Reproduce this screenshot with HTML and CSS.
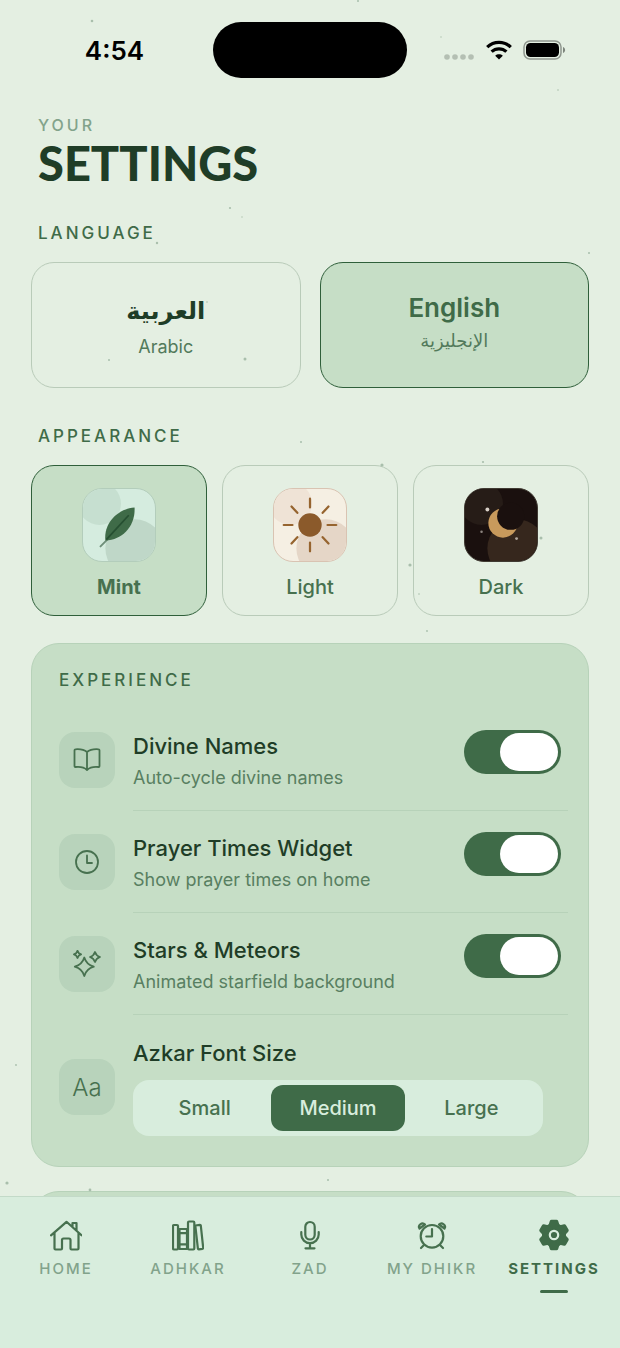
FILE: index.html
```html
<!DOCTYPE html>
<html lang="en">
<head>
    <meta charset="UTF-8">
    <meta name="viewport" content="width=device-width, initial-scale=1.0">
    <title>Settings</title>
    <link rel="stylesheet" href="styles.css">
</head>
<body>
    <!-- Starfield -->
    <svg class="stars" aria-hidden="true">
        <circle cx="92" cy="21" r="1.3"/>
        <circle cx="358" cy="1" r="1"/>
        <circle cx="441" cy="37" r="0.7"/>
        <circle cx="558" cy="90" r="0.8"/>
        <circle cx="230" cy="208" r="1.1"/>
        <circle cx="242" cy="217" r="0.7"/>
        <circle cx="157" cy="243" r="1.2"/>
        <circle cx="589" cy="253" r="1"/>
        <circle cx="207" cy="302" r="0.8"/>
        <circle cx="109" cy="360" r="1"/>
        <circle cx="245" cy="359" r="1.5"/>
        <circle cx="301" cy="442" r="1"/>
        <circle cx="483" cy="462" r="1.1"/>
        <circle cx="382" cy="465" r="1.6"/>
        <circle cx="541" cy="538" r="1.5"/>
        <circle cx="410" cy="565" r="1.6"/>
        <circle cx="419" cy="594" r="0.8"/>
        <circle cx="427" cy="631" r="0.9"/>
        <circle cx="16" cy="1065" r="0.9"/>
        <circle cx="328" cy="1180" r="1"/>
        <circle cx="7" cy="1183" r="1.6"/>
        <circle cx="90" cy="1190" r="1.4"/>
    </svg>

    <div class="status-bar">
        <div class="time">4:54</div>
        <div class="island"></div>
        <div class="status-icons">
            <svg width="32" height="20" viewBox="0 0 32 20" fill="#b4bfb3">
                <circle cx="4" cy="17" r="2.8"/>
                <circle cx="12" cy="17" r="2.8"/>
                <circle cx="20" cy="17" r="2.8"/>
                <circle cx="28" cy="17" r="2.8"/>
            </svg>
            <svg width="26" height="20" viewBox="0 0 26 20" fill="none" stroke="#000" stroke-width="3.2">
                <path d="M1.2 7.2C7.8 0.8 18.2 0.8 24.8 7.2"/>
                <path d="M5.6 11.7C9.8 7.8 16.2 7.8 20.4 11.7"/>
                <path d="M13 19.4L9.2 15.7C11.3 13.8 14.7 13.8 16.8 15.7Z" fill="#000" stroke="none"/>
            </svg>
            <svg width="43" height="20" viewBox="0 0 43 20">
                <rect x="1" y="1" width="37" height="18" rx="6" fill="none" stroke="#8f978e" stroke-width="1.5"/>
                <rect x="3" y="3" width="33" height="14" rx="4.5" fill="#000"/>
                <path d="M40 7C42.8 7.8 42.8 12.2 40 13Z" fill="#7d857c"/>
            </svg>
        </div>
    </div>

    <main>
        <header>
            <p class="eyebrow">YOUR</p>
            <h1>SETTINGS</h1>
        </header>

        <section class="language">
            <h2>LANGUAGE</h2>
            <div class="language-grid">
                <button class="option">
                    <span class="lang-name arabic" lang="ar">العربية</span>
                    <span class="lang-sub">Arabic</span>
                </button>
                <button class="option selected">
                    <span class="lang-name">English</span>
                    <span class="lang-sub" lang="ar">الإنجليزية</span>
                </button>
            </div>
        </section>

        <section class="appearance">
            <h2>APPEARANCE</h2>
            <div class="theme-grid">
                <button class="option theme selected">
                    <svg class="swatch mint" viewBox="0 0 74 74">
                        <circle cx="17" cy="15" r="22" fill="#c6dfd0"/>
                        <circle cx="53" cy="61" r="30" fill="#bfd7c8"/>
                        <path d="M18 59L26 51" stroke="#6f8f7a" stroke-width="2" stroke-linecap="round"/>
                        <path d="M53 19C37 20 21 34 23 53C41 52 54 38 53 19Z" fill="#3f6b48"/>
                        <path d="M24 52L47 27" stroke="#264f31" stroke-width="1.8"/>
                    </svg>
                    <span>Mint</span>
                </button>
                <button class="option theme">
                    <svg class="swatch light" viewBox="0 0 74 74">
                        <circle cx="17" cy="15" r="22" fill="#efe3d6"/>
                        <circle cx="53" cy="61" r="30" fill="#e5d6c7"/>
                        <circle cx="37" cy="37" r="12" fill="#8b5a2b"/>
                        <path d="M37 10V19M37 55V64M10 37H19M55 37H64M18 18L24 24.5M50 49.5L56 56M18 56L24 49.5M50 24.5L56 18" stroke="#96642f" stroke-width="2.3" stroke-linecap="round"/>
                    </svg>
                    <span>Light</span>
                </button>
                <button class="option theme">
                    <svg class="swatch dark" viewBox="0 0 74 74">
                        <circle cx="17" cy="15" r="22" fill="#261c17"/>
                        <circle cx="53" cy="61" r="30" fill="#36271d"/>
                        <circle cx="39" cy="35" r="15" fill="#c89a5c"/>
                        <circle cx="47" cy="28" r="14" fill="#1a100e"/>
                        <circle cx="23" cy="21" r="2" fill="#d8d0c8"/>
                        <circle cx="17" cy="44" r="1.3" fill="#8d8580"/>
                        <circle cx="53" cy="51" r="1.5" fill="#b0a69e"/>
                    </svg>
                    <span>Dark</span>
                </button>
            </div>
        </section>

        <section class="card">
            <h2>EXPERIENCE</h2>

            <div class="row">
                <div class="row-icon">
                    <svg viewBox="0 0 28 28">
                        <path d="M14 6C11 3.5 6 3 2.3 3.3Q1.5 3.3 1.5 4.2V20.2Q1.5 21 2.3 21C6 20.6 11 21 14 24C17 21 22 20.6 25.7 21Q26.5 21 26.5 20.2V4.2Q26.5 3.3 25.7 3.3C22 3 17 3.5 14 6ZM14 6V24"/>
                    </svg>
                </div>
                <div class="row-body">
                    <label class="row-text" for="divine-names">
                        <span class="row-title">Divine Names</span>
                        <span class="row-sub">Auto-cycle divine names</span>
                    </label>
                    <input class="toggle" type="checkbox" id="divine-names" checked>
                </div>
            </div>

            <div class="row">
                <div class="row-icon">
                    <svg viewBox="0 0 28 28">
                        <circle cx="14" cy="14" r="11"/>
                        <path d="M14 7.5V15H19"/>
                    </svg>
                </div>
                <div class="row-body">
                    <label class="row-text" for="prayer-widget">
                        <span class="row-title">Prayer Times Widget</span>
                        <span class="row-sub">Show prayer times on home</span>
                    </label>
                    <input class="toggle" type="checkbox" id="prayer-widget" checked>
                </div>
            </div>

            <div class="row">
                <div class="row-icon">
                    <svg viewBox="0 0 28 28">
                        <path d="M11.3 7.5Q13.4 14.6 20.8 16.7Q13.4 18.8 11.3 26Q9.2 18.8 1.8 16.7Q9.2 14.6 11.3 7.5Z"/>
                        <path d="M22 2Q23.2 5.8 27 7Q23.2 8.2 22 12Q20.8 8.2 17 7Q20.8 5.8 22 2Z"/>
                        <path d="M4.5 0.7Q5.3 3.5 8.1 4.3Q5.3 5.1 4.5 8Q3.7 5.1 0.9 4.3Q3.7 3.5 4.5 0.7Z"/>
                    </svg>
                </div>
                <div class="row-body">
                    <label class="row-text" for="stars-meteors">
                        <span class="row-title">Stars &amp; Meteors</span>
                        <span class="row-sub">Animated starfield background</span>
                    </label>
                    <input class="toggle" type="checkbox" id="stars-meteors" checked>
                </div>
            </div>

            <div class="row">
                <div class="row-icon font-icon">Aa</div>
                <fieldset class="font-size">
                    <legend class="row-title">Azkar Font Size</legend>
                    <div class="segments">
                        <label><input type="radio" name="font-size"><span>Small</span></label>
                        <label><input type="radio" name="font-size" checked><span>Medium</span></label>
                        <label><input type="radio" name="font-size"><span>Large</span></label>
                    </div>
                </fieldset>
            </div>
        </section>

        <section class="card next-card"></section>
    </main>

    <nav class="tab-bar">
        <a href="#home" class="tab">
            <svg viewBox="0 0 32 32">
                <path d="M1 16.3L16.5 2.8L31.5 16.3M4.5 14V29.5Q4.5 30.5 5.5 30.5H11Q12 30.5 12 29.5V21Q12 19.5 13.5 19.5H19Q20.5 19.5 20.5 21V29.5Q20.5 30.5 21.5 30.5H27.5Q28.5 30.5 28.5 29.5V14M22.5 8V4H26.5V11.5"/>
            </svg>
            HOME
        </a>
        <a href="#adhkar" class="tab">
            <svg viewBox="0 0 32 32">
                <rect x="1" y="6" width="5" height="24.5" rx="1"/>
                <path d="M7.5 10H15V30H7.5ZM7.5 14.2H15M7.5 25.4H15"/>
                <rect x="16" y="2.5" width="6.3" height="28" rx="1"/>
                <path d="M23.3 6.5L28 5.8Q28.7 5.8 28.8 6.5L31.2 28.9Q31.2 29.6 30.5 29.8L26.7 30.4Q26 30.4 25.9 29.7Z"/>
            </svg>
            ADHKAR
        </a>
        <a href="#zad" class="tab">
            <svg viewBox="0 0 32 32">
                <rect x="11.3" y="3" width="9.4" height="17.5" rx="4.7"/>
                <path d="M7.3 13V15.5A8.7 8.7 0 0 0 24.7 15.5V13M16 24.2V29.3M11.5 29.3H20.5"/>
            </svg>
            ZAD
        </a>
        <a href="#dhikr" class="tab">
            <svg viewBox="0 0 32 32">
                <circle cx="16" cy="17.3" r="11.3"/>
                <path d="M16 10V17.5H10.3M8 26L5 29M24 26L27 29M3.5 9.5C1.5 6.5 6 2.5 9 5.5ZM28.5 9.5C30.5 6.5 26 2.5 23 5.5Z"/>
            </svg>
            MY DHIKR
        </a>
        <a href="#settings" class="tab active">
            <svg class="gear" viewBox="0 0 32 32">
                <circle cx="16" cy="16" r="12"/>
                <path id="tooth" d="M10.5 6L11.8 2Q12.2 0.7 13.5 0.7H18.5Q19.8 0.7 20.2 2L21.5 6V26L20.2 30Q19.8 31.3 18.5 31.3H13.5Q12.2 31.3 11.8 30L10.5 26Z"/>
                <use href="#tooth" transform="rotate(60 16 16)"/>
                <use href="#tooth" transform="rotate(120 16 16)"/>
                <circle class="gear-hole" cx="16" cy="16" r="4.2"/>
            </svg>
            SETTINGS
        </a>
    </nav>
</body>
</html>
```
FILE: styles.css
```css
* {
    margin: 0;
    padding: 0;
    box-sizing: border-box;
}

body {
    background-color: #e4efe2;
    color: #1f3d27;
    font-family: Inter, "DejaVu Sans", sans-serif;
    height: 100vh;
    display: flex;
    flex-direction: column;
    overflow: hidden;
}

button {
    font-family: inherit;
    color: inherit;
    cursor: pointer;
}

.stars {
    position: absolute;
    top: 0;
    left: 0;
    width: 100%;
    height: 100%;
    fill: #a9bfac;
    pointer-events: none;
}

/* Status bar */
.status-bar {
    display: grid;
    grid-template-columns: 1fr 194px 1fr;
    align-items: center;
    padding-top: 22px;
    margin-bottom: 37px;
}

.time {
    padding-left: 16px;
    text-align: center;
    font-size: 26px;
    font-weight: 600;
    color: #000;
}

.island {
    height: 56px;
    border-radius: 28px;
    background-color: #000;
}

.status-icons {
    display: flex;
    justify-content: flex-end;
    gap: 11px;
    padding-right: 54px;
}

/* Content */
main {
    flex: 1;
    min-height: 0;
    overflow: hidden;
    padding: 0 31px;
}

header {
    padding: 0 7px;
    margin-bottom: 32px;
}

.eyebrow {
    font-size: 16px;
    line-height: 20px;
    font-weight: 500;
    letter-spacing: 3px;
    color: #82a38b;
}

h1 {
    font-family: Lato, sans-serif;
    font-size: 47px;
    line-height: 56px;
    font-weight: 900;
}

h2 {
    font-size: 17px;
    line-height: 20px;
    font-weight: 500;
    letter-spacing: 3px;
    color: #3f6b48;
    padding: 0 7px;
    margin-bottom: 19px;
}

.language {
    margin-bottom: 38px;
}

.appearance {
    margin-bottom: 27px;
}

.language-grid {
    display: grid;
    grid-template-columns: 1fr 1fr;
    gap: 19px;
}

.theme-grid {
    display: grid;
    grid-template-columns: repeat(3, 1fr);
    gap: 15px;
}

.option {
    display: flex;
    flex-direction: column;
    align-items: center;
    background: none;
    border: 1px solid #b9cbb9;
    border-radius: 23px;
    padding: 28px 20px;
}

.option.selected {
    background-color: #c6dec6;
    border-color: #2f5f3a;
}

.lang-name {
    font-size: 26px;
    line-height: 34px;
    font-weight: 600;
    margin-bottom: 4px;
}

.selected .lang-name {
    color: #3f6b48;
}

.lang-name.arabic {
    font-size: 24px;
    font-weight: 700;
    line-height: 40px;
}

.lang-sub {
    font-size: 18px;
    line-height: 24px;
    color: #527a5b;
}

.option.theme {
    gap: 11px;
    padding: 22px 10px 14px;
    font-size: 20px;
    line-height: 28px;
    font-weight: 500;
    color: #47714f;
}

.option.theme.selected {
    font-weight: 700;
}

.swatch {
    width: 74px;
    height: 74px;
    border-radius: 20px;
    border: 1px solid #b3cdbb;
}

.swatch.mint {
    background-color: #d5ecdf;
}

.swatch.light {
    background-color: #f5efe3;
    border-color: #d9c3b2;
}

.swatch.dark {
    background-color: #1a100e;
    border-color: #403a32;
}

/* Experience card */
.card {
    background-color: #c6dec6;
    border: 1px solid #b7d2b9;
    border-radius: 28px;
    padding: 26px 27px 7px;
    margin-bottom: 24px;
}

.card h2 {
    padding: 0;
}

.next-card {
    height: 200px;
}

.row {
    display: flex;
    align-items: center;
    gap: 18px;
}

.row-icon {
    display: flex;
    align-items: center;
    justify-content: center;
    width: 56px;
    height: 56px;
    border-radius: 16px;
    background-color: #b8d3bb;
    color: #47714f;
}

.row-icon svg {
    width: 28px;
    height: 28px;
    fill: none;
    stroke: #47714f;
    stroke-width: 1.8;
    stroke-linecap: round;
    stroke-linejoin: round;
}

.font-icon {
    font-size: 24px;
    font-weight: 300;
}

.row-body {
    flex: 1;
    display: flex;
    justify-content: space-between;
    align-items: flex-start;
    margin-right: -7px;
    padding: 21px 7px 20px 0;
    border-bottom: 1px solid #b7d2b9;
}

.row-text {
    display: flex;
    flex-direction: column;
    gap: 4px;
}

.row-title {
    font-size: 22px;
    line-height: 32px;
    font-weight: 500;
}

.row-sub {
    font-size: 18px;
    line-height: 24px;
    color: #587f61;
}

.toggle {
    appearance: none;
    width: 97px;
    height: 44px;
    padding: 3px;
    border-radius: 22px;
    background-color: #b0c9b3;
    cursor: pointer;
}

.toggle::before {
    content: "";
    display: block;
    width: 58px;
    height: 38px;
    border-radius: 19px;
    background-color: #fff;
}

.toggle:checked {
    background-color: #3f6b48;
}

.toggle:checked::before {
    margin-left: auto;
}

.font-size {
    flex: 1;
    border: none;
    margin-right: 18px;
    padding: 11px 0 23px;
}

.font-size legend {
    padding-top: 22px;
}

.segments {
    display: grid;
    grid-template-columns: repeat(3, 1fr);
    padding: 5px;
    border-radius: 16px;
    background-color: #d8eddd;
}

.segments input {
    appearance: none;
    position: absolute;
}

.segments span {
    display: block;
    border-radius: 12px;
    text-align: center;
    font-size: 20px;
    line-height: 46px;
    font-weight: 500;
    color: #47714f;
    cursor: pointer;
}

.segments input:checked + span {
    background-color: #3f6b48;
    color: #d8eddd;
}

/* Tab bar */
.tab-bar {
    position: relative;
    display: grid;
    grid-template-columns: repeat(5, 1fr);
    height: 152px;
    padding: 22px 5px 0;
    background-color: #d8eddd;
    border-top: 1px solid #c3dac8;
}

.tab {
    display: flex;
    flex-direction: column;
    align-items: center;
    gap: 8px;
    font-size: 15px;
    line-height: 20px;
    font-weight: 500;
    letter-spacing: 2px;
    white-space: nowrap;
    text-decoration: none;
    color: #82a38b;
}

.tab svg {
    width: 32px;
    height: 32px;
    fill: none;
    stroke: #47714f;
    stroke-width: 2.2;
    stroke-linecap: round;
    stroke-linejoin: round;
}

.tab.active {
    font-weight: 700;
    color: #3f6b48;
}

.tab.active::after {
    content: "";
    width: 28px;
    height: 3px;
    margin-top: 3px;
    border-radius: 2px;
    background-color: #3f6b48;
}

.tab .gear {
    fill: #3f6b48;
    stroke: none;
}

.gear .gear-hole {
    stroke: #d8eddd;
}
```
